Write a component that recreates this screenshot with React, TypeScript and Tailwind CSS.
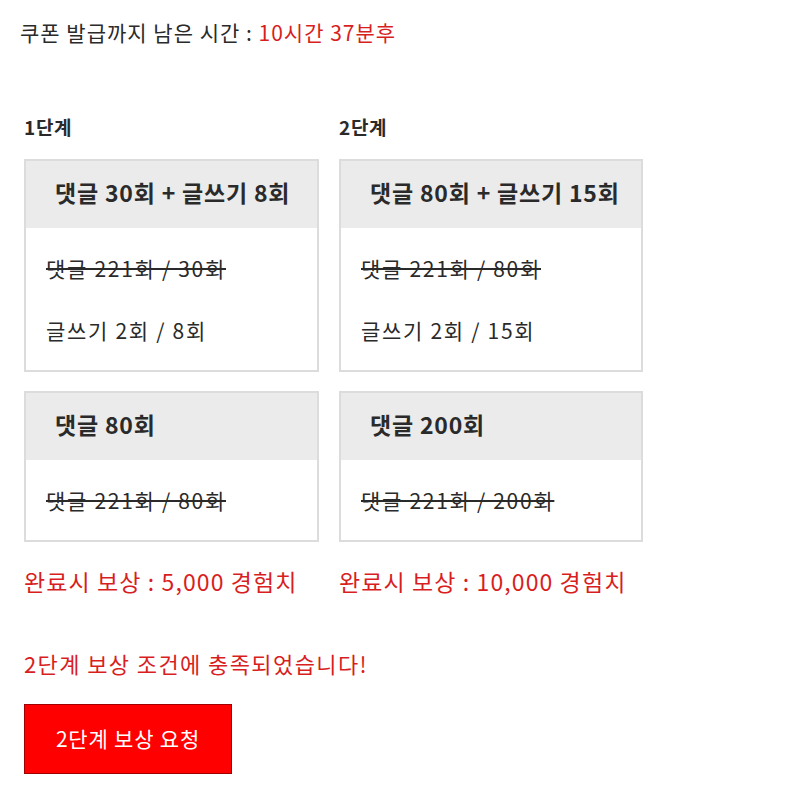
import React from 'react';

type Stage = {
  label: string;
  width: string;
  boxes: { title: string; lines: { text: string; done: boolean }[] }[];
  reward: string;
};

const stages: Stage[] = [
  {
    label: '1단계',
    width: 'w-[295px]',
    boxes: [
      {
        title: '댓글 30회 + 글쓰기 8회',
        lines: [
          { text: '댓글 221회 / 30회', done: true },
          { text: '글쓰기 2회 / 8회', done: false },
        ],
      },
      {
        title: '댓글 80회',
        lines: [{ text: '댓글 221회 / 80회', done: true }],
      },
    ],
    reward: '완료시 보상 : 5,000 경험치',
  },
  {
    label: '2단계',
    width: 'w-[304px]',
    boxes: [
      {
        title: '댓글 80회 + 글쓰기 15회',
        lines: [
          { text: '댓글 221회 / 80회', done: true },
          { text: '글쓰기 2회 / 15회', done: false },
        ],
      },
      {
        title: '댓글 200회',
        lines: [{ text: '댓글 221회 / 200회', done: true }],
      },
    ],
    reward: '완료시 보상 : 10,000 경험치',
  },
];

export default function App() {
  return (
    <div className="min-h-[809px] bg-white px-6 pt-[16px] text-[#2a2a2a] font-['Noto_Sans_CJK_KR','Noto_Sans',sans-serif]">
      <p className="-ml-1 text-[21px] leading-[32px] tracking-[1px]">
        쿠폰 발급까지 남은 시간 : <span className="text-[#d81e1e]">10시간 37분후</span>
      </p>

      <div className="mt-[65px] flex gap-5">
        {stages.map((s) => (
          <div key={s.label} className={`${s.width} flex flex-col`}>
            <h3 className="text-[19px] font-bold leading-[28px] tracking-[0.7px]">{s.label}</h3>
            <div className="mt-[18px] flex flex-col gap-[19px]">
              {s.boxes.map((b) => (
                <div key={b.title} className="border-2 border-[#dcdcdc]">
                  <div className="flex h-[67px] items-center bg-[#ebebeb] pb-[4px] pl-[29px] text-[23px] font-bold tracking-[0.8px]">
                    {b.title}
                  </div>
                  <div className="flex flex-col gap-[30px] px-5 pt-[24px] pb-[24px] text-[21px] leading-[32px] tracking-[1.7px]">
                    {b.lines.map((l) => (
                      <p key={l.text} className={l.done ? 'line-through decoration-[#2a2a2a] decoration-[1.5px]' : ''}>
                        {l.text}
                      </p>
                    ))}
                  </div>
                </div>
              ))}
            </div>
            <p className="mt-[22px] text-[23px] leading-[34px] tracking-[1.1px] text-[#d81e1e]">{s.reward}</p>
          </div>
        ))}
      </div>

      <p className="mt-[48px] text-[22px] leading-[34px] tracking-[1.4px] text-[#d81e1e]">2단계 보상 조건에 충족되었습니다!</p>

      <button className="mt-[24px] h-[70px] w-[208px] border border-[#a00000] bg-[#ff0000] text-[21px] tracking-[0.8px] text-white">
        2단계 보상 요청
      </button>
    </div>
  );
}
